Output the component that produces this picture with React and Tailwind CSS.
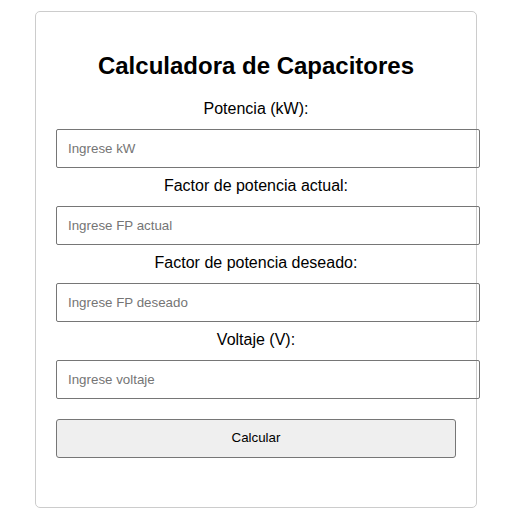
import React, { useState } from 'react';

const fields = [
  { name: 'kw', label: 'Potencia (kW):', placeholder: 'Ingrese kW' },
  { name: 'fpActual', label: 'Factor de potencia actual:', placeholder: 'Ingrese FP actual' },
  { name: 'fpDeseado', label: 'Factor de potencia deseado:', placeholder: 'Ingrese FP deseado' },
  { name: 'voltaje', label: 'Voltaje (V):', placeholder: 'Ingrese voltaje' },
];

function App() {
  const [values, setValues] = useState({ kw: '', fpActual: '', fpDeseado: '', voltaje: '' });
  const [result, setResult] = useState('');

  const handleChange = (e) => {
    const { name, value } = e.target;
    setValues((prev) => ({ ...prev, [name]: value }));
  };

  const calcular = () => {
    const p = parseFloat(values.kw);
    const fp1 = parseFloat(values.fpActual);
    const fp2 = parseFloat(values.fpDeseado);
    if (!p || !fp1 || !fp2) return;
    const kvar = p * (Math.tan(Math.acos(fp1)) - Math.tan(Math.acos(fp2)));
    setResult(`Potencia reactiva necesaria: ${kvar.toFixed(2)} kVAR`);
  };

  return (
    <div className="min-h-screen bg-white pt-[11px] font-['Liberation_Sans',Arial,sans-serif] text-black">
      {/* Card */}
      <div className="ml-[35px] w-[442px] h-[497px] rounded-[5px] border border-[#cccccc] px-5 pt-5">
        <h2 className="mt-5 mb-5 text-center text-[24px] leading-[27.6px] font-bold">
          Calculadora de Capacitores
        </h2>
        {fields.map((f) => (
          <div key={f.name}>
            <label className="block text-center text-[16px] leading-[18px] mb-[11px]">{f.label}</label>
            <input
              type="number"
              name={f.name}
              value={values[f.name]}
              onChange={handleChange}
              placeholder={f.placeholder}
              className="block box-border w-[424px] h-[39px] mb-[9px] px-[11px] rounded-[2px] border border-[#767676] text-[13.33px] placeholder:text-[#757575] outline-none [appearance:textfield] [&::-webkit-inner-spin-button]:appearance-none"
            />
          </div>
        ))}
        <button
          onClick={calcular}
          className="mt-[11px] box-border w-[400px] h-[39px] rounded-[3px] border border-[#767676] bg-[#efefef] text-[13.33px] text-black"
        >
          Calcular
        </button>
        {result && <p className="mt-2 text-center text-[14px]">{result}</p>}
      </div>
    </div>
  );
}

export default App;
